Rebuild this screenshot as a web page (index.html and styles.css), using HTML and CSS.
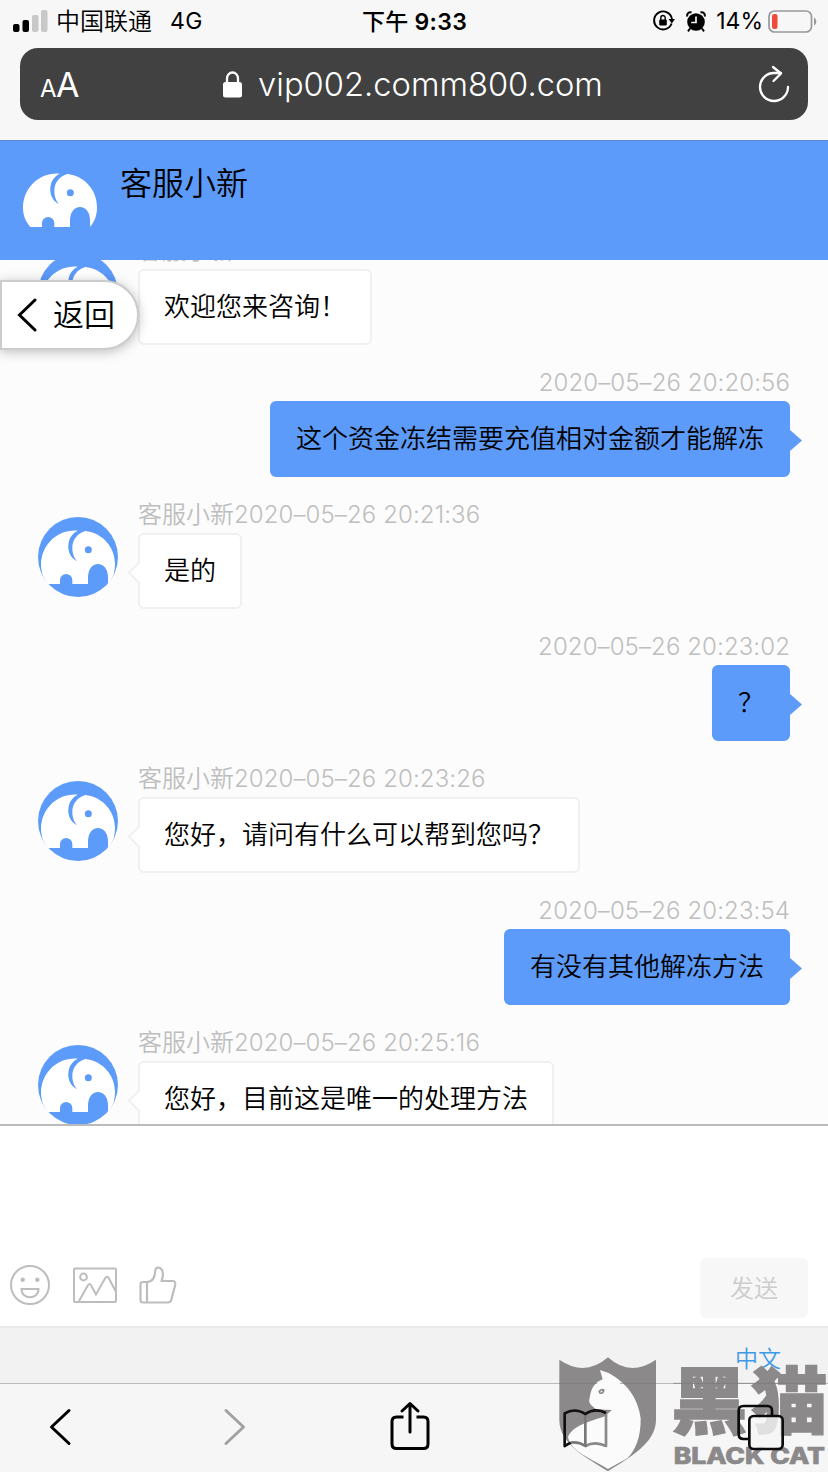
FILE: index.html
```html
<!DOCTYPE html>
<html lang="zh-CN">
<head>
  <meta charset="UTF-8" />
  <meta name="viewport" content="width=device-width, initial-scale=1.0" />
  <title>客服小新</title>
  <link rel="stylesheet" href="styles.css">
</head>
<body>
  <svg class="defs" width="0" height="0">
    <symbol id="elephant" viewBox="0 0 240 240">
      <circle cx="120" cy="120" r="120" fill="#5c9bf9" />
      <path fill="#fff" d="M31 201C16 184 9 166 9 142C10 82 60 36 119 41C96 53 90 72 91 94C93 112 102 124 116 133C106 119 102 105 103 88C105 66 120 48 142 42C194 48 231 90 231 142C231 166 224 186 210 201C211 196 210 190 210 177A30 36 0 0 0 150 177V201H103V189A18.500 18 0 0 0 66 189V201Z" />
      <circle cx="151" cy="98" r="10.5" fill="#5c9bf9" />
    </symbol>
  </svg>

  <div class="browser-top">
    <div class="status">
      <div class="status-left">
        <svg width="35" height="22" viewBox="0 0 35 22">
          <rect x="0" y="14" width="6.5" height="8" rx="2" />
          <rect x="9.5" y="10" width="6.5" height="12" rx="2" />
          <rect x="19" y="5" width="6.5" height="17" rx="2" fill="#c8c8c8" />
          <rect x="28" y="0" width="6.5" height="22" rx="2" fill="#c8c8c8" />
        </svg>
        <span class="carrier">中国联通</span>
        <span class="network">4G</span>
      </div>
      <div class="clock"><span>下午</span> 9:33</div>
      <div class="status-right">
        <svg width="22" height="22" viewBox="0 0 22 22">
          <path d="M18.6 13.5A9 9 0 1 1 19 9" fill="none" stroke="#000" stroke-width="1.9" />
          <path d="M15.5 9H22L18.8 13.4Z" />
          <rect x="6.2" y="9.5" width="7.6" height="6" rx="1" />
          <path d="M7.8 10V7.7a2.2 2.2 0 0 1 4.4 0V10" fill="none" stroke="#000" stroke-width="1.4" />
        </svg>
        <svg class="alarm" width="20" height="21" viewBox="0 0 20 21">
          <circle cx="10" cy="11" r="8.8" />
          <path d="M1.5 5.5A3 3 0 0 1 5.5 1.5M14.5 1.5A3 3 0 0 1 18.5 5.5M4 17.5L2 20.3M16 17.5L18 20.3" fill="none" stroke="#000" stroke-width="2" />
          <path d="M10 5.500V11.500H5.200" fill="none" stroke="#f7f7f7" stroke-width="1.7" />
        </svg>
        <span class="percent">14%</span>
        <svg width="49" height="23" viewBox="0 0 49 23">
          <rect x="1" y="1" width="42.5" height="21" rx="5.5" fill="none" stroke="#999" stroke-width="1.7" />
          <rect x="4" y="4" width="5.5" height="15" rx="2.3" fill="#ee4b3b" />
          <path d="M46 7.5C49 9 49 14 46 15.5Z" fill="#999" />
        </svg>
      </div>
    </div>
    <div class="address">
      <div class="text-size"><small>A</small>A</div>
      <div class="url">
        <svg width="19" height="27" viewBox="0 0 19 27">
          <rect x="0" y="11" width="19" height="15.5" rx="2.5" fill="#fff" />
          <path d="M4 12V7.5a5.5 6 0 0 1 11 0V12" fill="none" stroke="#fff" stroke-width="2.3" />
        </svg>
        <span class="host">vip002.comm800.com</span>
      </div>
      <svg width="32" height="38" viewBox="0 0 32 38" fill="none" stroke="#fff" stroke-width="2.3" stroke-linecap="round" stroke-linejoin="round">
        <path d="M30 22A14 14 0 1 1 16 8H23" />
        <path d="M15 2L23 8.5L15.5 16" />
      </svg>
    </div>
  </div>

  <header class="agent">
    <svg class="avatar"><use href="#elephant" /></svg>
    <h1>客服小新</h1>
  </header>

  <main class="chat">
    <div class="msg">
      <svg class="avatar"><use href="#elephant" /></svg>
      <div class="body">
        <div class="meta">客服小新</div>
        <div class="bubble no-tail">欢迎您来咨询！</div>
      </div>
    </div>
    <div class="msg mine">
      <div class="body">
        <div class="meta"><span>2020–05–26 20:20:56</span></div>
        <div class="bubble">这个资金冻结需要充值相对金额才能解冻</div>
      </div>
    </div>
    <div class="msg">
      <svg class="avatar"><use href="#elephant" /></svg>
      <div class="body">
        <div class="meta">客服小新<span>2020–05–26 20:21:36</span></div>
        <div class="bubble">是的</div>
      </div>
    </div>
    <div class="msg mine">
      <div class="body">
        <div class="meta"><span>2020–05–26 20:23:02</span></div>
        <div class="bubble">？</div>
      </div>
    </div>
    <div class="msg">
      <svg class="avatar"><use href="#elephant" /></svg>
      <div class="body">
        <div class="meta">客服小新<span>2020–05–26 20:23:26</span></div>
        <div class="bubble">您好，请问有什么可以帮到您吗？</div>
      </div>
    </div>
    <div class="msg mine">
      <div class="body">
        <div class="meta"><span>2020–05–26 20:23:54</span></div>
        <div class="bubble">有没有其他解冻方法</div>
      </div>
    </div>
    <div class="msg">
      <svg class="avatar"><use href="#elephant" /></svg>
      <div class="body">
        <div class="meta">客服小新<span>2020–05–26 20:25:16</span></div>
        <div class="bubble">您好，目前这是唯一的处理方法</div>
      </div>
    </div>
  </main>

  <a class="back">
    <svg width="20" height="34" viewBox="0 0 20 34"><path d="M18 2L2.5 17L18 32" fill="none" stroke="#000" stroke-width="3" stroke-linecap="round" /></svg>
    <span>返回</span>
  </a>

  <section class="composer">
    <div class="tools">
      <svg width="40" height="40" viewBox="0 0 40 40" fill="none" stroke="#bdbdbd" stroke-width="2">
        <circle cx="20" cy="20" r="19" />
        <circle cx="12.7" cy="14.7" r="2.2" fill="#bdbdbd" stroke="none" />
        <circle cx="27.3" cy="14.7" r="2.2" fill="#bdbdbd" stroke="none" />
        <path d="M11.5 24H28.5C28.5 35 11.5 35 11.5 24Z" />
      </svg>
      <svg width="44" height="36" viewBox="0 0 44 36" fill="none" stroke="#bdbdbd" stroke-width="2">
        <rect x="1" y="1.5" width="42" height="33.5" rx="1" />
        <circle cx="10.5" cy="10" r="3.4" />
        <path d="M6 34L14.5 19Q16.5 15 18.5 19L23 27.5L32 11.5Q34 8 36 11.5L43 25" />
      </svg>
      <svg width="38" height="38" viewBox="0 0 38 38" fill="none" stroke="#bdbdbd" stroke-width="2.2" stroke-linejoin="round">
        <path d="M8 16H4Q1.5 16 1.5 18.5V34Q1.5 36.5 4 36.5H29Q31.5 36.5 32.2 34L36.2 19Q36.8 15 33.5 15H22.5C24 11 24.5 7 23 4C21 .5 16.5 1 16.3 4.5C16 10 14 16 8 16V36.5" />
      </svg>
    </div>
    <button class="send">发送</button>
  </section>

  <footer class="language">中文</footer>

  <nav class="toolbar">
    <svg viewBox="0 0 70 60"><path d="M44 13.5L26.5 30L44 46.5" stroke="#000" /></svg>
    <svg viewBox="0 0 70 60"><path d="M26 13.5L43.5 30L26 46.5" stroke="#a2a2a2" /></svg>
    <svg viewBox="0 0 70 60" stroke="#000">
      <path d="M28.5 20H21.5Q17 20 17 24.5V47Q17 51.5 21.5 51.5H48.5Q53 51.5 53 47V24.5Q53 20 48.5 20H41.5" stroke-linecap="butt" />
      <path d="M35 35V6.5M27 14L35 6.5L43 14" />
    </svg>
    <svg viewBox="0 0 70 60"></svg>
    <svg viewBox="0 0 70 60"></svg>
  </nav>

  <svg class="watermark" viewBox="0 0 864 396">
    <path fill="#8b898a" d="M58 59Q135 112 204 52Q270 112 348 59V240C348 310 265 355 204 394C145 355 58 315 58 240Z" />
    <path fill="#fbfbfb" d="M180 90L206 99Q290 145 302 235C303 294 285 332 262 355L204 387C160 358 88 333 84 290C100 254 165 240 194 229L216 210L168 208C146 190 145 188 150 169C153 144 166 126 188 118Z" />
    <path fill="#8b898a" d="M175 153Q185 142 194 149Q192 165 178 161ZM183 151L181 158L188 155Z" fill-rule="evenodd" />
    <text class="mark-cn" transform="translate(508 265) scale(1.01 .95)" text-anchor="middle">黑</text>
    <text class="mark-cn" transform="translate(748 265) scale(1.01 .95)" text-anchor="middle">猫</text>
    <text class="mark-en" x="401" y="373" textLength="454" lengthAdjust="spacingAndGlyphs">BLACK CAT</text>
    <path stroke="#777" stroke-width="2" d="M58 130H172M240 130H348M400 130H856" />
    <g fill="none" stroke-width="8" stroke-linejoin="round">
      <path stroke="#8a8889" d="M198 219V318Q165 302 136 318" />
      <path stroke="#777" d="M92 308Q115 304 136 318V222" />
      <path stroke="#111" d="M92 308L74 318V220Q105 202 136 222Q165 202 198 219" />
      <path stroke="#0b0b0b" d="M624 297H610Q596 297 596 283V212Q596 198 610 198H682Q696 198 696 212V227" />
      <rect stroke="#0b0b0b" x="628" y="228" width="100" height="99" rx="13" fill="#f6f6f6" fill-opacity=".8" />
    </g>
  </svg>
</body>
</html>
```
FILE: styles.css
```css
* { box-sizing: border-box; }
body { margin: 0; width: 828px; height: 1472px; position: relative; overflow: hidden; background: #fcfcfc; color: #000; font-family: "Noto Sans CJK SC", sans-serif; font-weight: 350; }
svg { display: block; flex: none; }
.defs { position: absolute; }

.browser-top { height: 140px; background: #f7f7f7; padding: 0 20px; }
.status { height: 48px; display: grid; grid-template-columns: 1fr auto 1fr; align-items: center; font-family: Inter, "Noto Sans CJK SC", sans-serif; font-size: 23px; margin: 0 -8px 0 -7px; padding-bottom: 6px; }
.status-left, .status-right { display: flex; align-items: center; }
.status-right { justify-content: flex-end; margin-right: -1px; }
.carrier { margin-left: 8px; padding-bottom: 3px; font-size: 24px; }
.network { margin-left: 18px; letter-spacing: 0.3px; font-weight: 400; }
.clock { padding-bottom: 3px; font-weight: 600; letter-spacing: 0.3px; }
.clock span { font-weight: 500; }
.alarm { margin-left: 11px; }
.percent { margin: 0 5px 0 10px; font-weight: 400; }
.address { height: 72px; border-radius: 18px; background: #414141; color: #fff; display: flex; align-items: center; justify-content: space-between; padding: 0 18px 0 20px; font-family: Inter, sans-serif; }
.text-size { font-size: 34px; font-weight: 400; width: 42px; white-space: nowrap; letter-spacing: -0.5px; }
.text-size small { font-size: 24px; }
.url { display: flex; align-items: center; gap: 16px; margin-right: 14px; font-size: 32.7px; }
.host { white-space: nowrap; }

.agent { height: 120px; background: #5c9bf9; border-top: 1px solid #5b8bd2; padding: 19px 20px; display: flex; gap: 20px; }
.avatar { width: 80px; height: 80px; }
h1 { margin: 0; font-size: 32px; font-weight: 350; line-height: 42px; }

.chat { height: 864px; overflow: hidden; padding: 0 38px; }
.msg { height: 132px; display: flex; gap: 20px; }
.msg:first-child { margin-top: -24px; }
.msg .avatar { margin-top: 16.5px; }
.mine { justify-content: flex-end; }
.body { display: flex; flex-direction: column; align-items: flex-start; }
.mine .body { align-items: flex-end; }
.meta { height: 33px; line-height: 26px; font-size: 24px; color: #bebebe; white-space: nowrap; }
.meta span { font-family: Inter, sans-serif; letter-spacing: 0.1px; }
.bubble { position: relative; height: 76px; line-height: 68px; padding: 0 24px; border: 2px solid #f0f0f0; border-radius: 6px; background: #fff; font-size: 26px; white-space: nowrap; }
.bubble::before { content: ""; position: absolute; left: -9px; top: 29px; width: 15px; height: 15px; background: #fff; border: solid #f0f0f0; border-width: 0 0 2px 2px; transform: rotate(45deg); }
.no-tail::before { display: none; }
.mine .bubble { background: #5c9bf9; border-color: #5c9bf9; }
.mine .bubble::before { left: auto; right: -14px; top: 27px; width: 12px; height: 21px; border: 0; background: #5c9bf9; transform: none; clip-path: polygon(0 0, 100% 50%, 0 100%); }

/* floating back button */
.back { position: absolute; left: 0; top: 280px; width: 139px; height: 70px; display: flex; align-items: center; gap: 16px; padding-left: 15px; background: #fff; border: 2px solid #ccc; border-radius: 0 35px 35px 0; box-shadow: 0 2px 12px rgba(0, 0, 0, 0.25); font-size: 31px; }
.back span { padding-bottom: 5px; }

.composer { height: 202px; background: #fff; border-top: 2px solid #bbb; padding: 0 20px 8px 10px; display: flex; justify-content: space-between; align-items: flex-end; }
.tools { display: flex; align-items: center; gap: 22.5px; height: 60px; padding-bottom: 6px; }
.send { width: 108px; height: 60px; border: 0; border-radius: 6px; background: #f7f7f7; color: #ccc; font: 350 24px "Noto Sans CJK SC", sans-serif; padding-bottom: 5px; }
.language { height: 58px; background: #f2f2f2; border-top: 2px solid #eaeaea; border-bottom: 1px solid #bbb; padding: 10px 47px 0 0; text-align: right; color: #3e9ae6; font-size: 23px; line-height: 38px; }
.toolbar { height: 88px; background: #f6f6f6; display: flex; justify-content: space-between; padding: 13px 33px 0 25px; }
.toolbar svg { width: 70px; height: 60px; fill: none; stroke-width: 3; stroke-linecap: round; stroke-linejoin: round; }

.watermark { position: absolute; left: 540px; top: 1340px; width: 288px; height: 132px; }
.mark-cn { font: 900 228px "Noto Sans CJK SC", sans-serif; fill: #8b898a; stroke: #8b898a; stroke-width: 4; }
.mark-en { font: 800 67px Inter, sans-serif; fill: #8b898a; stroke: #8b898a; stroke-width: 2; }
```
